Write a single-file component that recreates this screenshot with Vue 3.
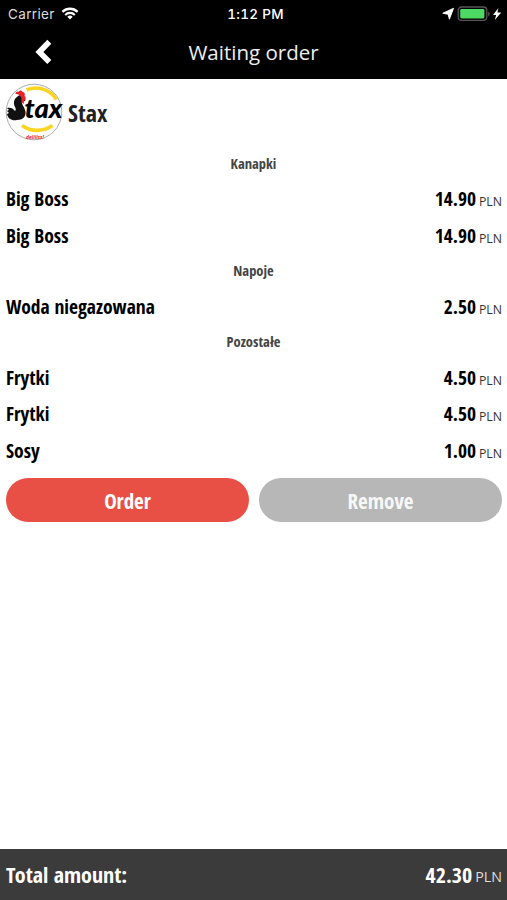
<template>
  <div class="screen">
    <header class="top">
      <div class="status">
        <div class="carrier">
          <span>Carrier</span>
          <svg width="18" height="13" viewBox="0 0 18 13" fill="none" stroke="#fff">
            <path d="M1.4 4.9a10.8 10.8 0 0 1 15.2 0" stroke-width="2.3" />
            <path d="M4.2 7.9a6.8 6.8 0 0 1 9.6 0" stroke-width="2.1" />
            <path d="M9 12.4 6.3 9.8a3.8 3.8 0 0 1 5.4 0z" fill="#fff" stroke="none" />
          </svg>
        </div>
        <div class="time">1:12 PM</div>
        <div class="power">
          <svg width="66" height="16" viewBox="0 0 66 16">
            <path d="M12.4 2.4 8.4 12.8 7.2 8.2 2 7.2z" fill="#fff" stroke="#fff" stroke-width="1.1" stroke-linejoin="round" />
            <rect x="17.2" y="1" width="28.6" height="13.4" rx="3.4" fill="none" stroke="#555" stroke-width="1.3" />
            <rect x="19.2" y="2.9" width="24.2" height="9.6" rx="1.4" fill="#4cd964" />
            <path d="M47.2 5.6c2 .8 2 4 0 4.8z" fill="#555" />
            <path d="M57.4 2 52 9h3.2L53.8 14l6.4-7.4h-3.8z" fill="#fff" />
          </svg>
        </div>
      </div>
      <nav class="bar">
        <button class="back" aria-label="Back">
          <svg width="18" height="26" viewBox="0 0 18 26">
            <path d="M12.3.8 16.3 4.8 8.4 13l7.9 8.1-4 4L.4 13z" fill="#fff" />
          </svg>
        </button>
        <h1>Waiting order</h1>
      </nav>
    </header>

    <main class="content">
      <div class="brand">
        <svg class="logo" width="58" height="58" viewBox="0 0 58 58">
          <circle cx="29" cy="29" r="27.8" fill="#fff" stroke="#aaa" stroke-width="1" />
          <path d="M21.5 6.8C32 2.5 45 6 51.5 16.5" fill="none" stroke="#fbd51f" stroke-width="3.6" />
          <path d="M17 42.5c9 6.5 21 6.5 30.5 0" fill="none" stroke="#fbd51f" stroke-width="3.6" />
          <!-- rooster shaped S -->
          <path
            d="M12 14c-3 2-4 6-2 10 1 2 1 3 0 4-2-3-5-4-8-3l2 2-2 1 2 2-2 1c1 5 5 7 10 6 7 0 10-5 8-10-1-4-4-6-3-9h3c1-2 0-4-2-5-3-1-4-1-6 1z"
            fill="#111"
          />
          <path d="M10.5 11c0-2 2-3 3-2 1-2 3-2 4 0 2 0 3 2 2 4 2 1 1 4 0 4l-1 4c-2-1-2-3-2-5 0-3-3-5-6-5z" fill="#e9222b" />
          <text x="19.5" y="34.5" class="logo-text" textLength="38" lengthAdjust="spacingAndGlyphs">tax</text>
          <text x="21" y="56" class="logo-note">deliliss!</text>
        </svg>
        <h2>Stax</h2>
      </div>

      <section v-for="group in groups" :key="group.name">
        <h3>{{ group.name }}</h3>
        <div v-for="(item, i) in group.items" :key="i" class="item">
          <span class="name">{{ item.name }}</span>
          <span class="price">{{ item.price }} <small>PLN</small></span>
        </div>
      </section>

      <div class="actions">
        <button class="btn order">Order</button>
        <button class="btn remove">Remove</button>
      </div>
    </main>

    <footer class="total">
      <span>Total amount:</span>
      <span class="price">{{ total }} <small>PLN</small></span>
    </footer>
  </div>
</template>

<script setup>
import { computed, ref } from "vue";

const groups = ref([
  {
    name: "Kanapki",
    items: [
      { name: "Big Boss", price: "14.90" },
      { name: "Big Boss", price: "14.90" },
    ],
  },
  {
    name: "Napoje",
    items: [{ name: "Woda niegazowana", price: "2.50" }],
  },
  {
    name: "Pozostałe",
    items: [
      { name: "Frytki", price: "4.50" },
      { name: "Frytki", price: "4.50" },
      { name: "Sosy", price: "1.00" },
    ],
  },
]);

const total = computed(() =>
  groups.value
    .flatMap((group) => group.items)
    .reduce((sum, item) => sum + Number(item.price), 0)
    .toFixed(2)
);
</script>

<style>
body {
  background: #fff;
}
</style>

<style scoped>
* {
  padding: 0;
  margin: 0;
  box-sizing: border-box;
}
.screen {
  height: 900px;
  display: flex;
  flex-direction: column;
  font-family: "Open Sans Condensed", "Open Sans", sans-serif;
  font-stretch: 75%;
  font-weight: bold;
  color: #111;
}
.top {
  height: 79px;
  background: #000;
  color: #fff;
}
.status {
  height: 27px;
  padding: 0 4px 0 8px;
  display: grid;
  grid-template-columns: 1fr auto 1fr;
  align-items: center;
  font: 500 13.5px Inter, sans-serif;
}
.carrier {
  display: flex;
  align-items: center;
  gap: 6px;
  font-weight: 400;
  letter-spacing: 0.35px;
  color: #ddd;
}
.time {
  font-variant-numeric: tabular-nums;
  letter-spacing: 0.3px;
}
.power {
  display: flex;
  justify-content: flex-end;
  margin-right: -4px;
}
.bar {
  height: 50px;
  display: grid;
  grid-template-columns: 88px 1fr 88px;
  align-items: center;
}
.back {
  border: 0;
  background: none;
  height: 26px;
}
.bar h1 {
  font: 400 20.5px/28px "Open Sans", sans-serif;
  text-align: center;
  color: #eee;
}
.content {
  flex: 1;
}
.brand {
  height: 67px;
  padding: 4px 5px 0;
  display: flex;
  align-items: flex-start;
  gap: 5px;
}
.brand h2 {
  font-size: 24px;
  line-height: 60px;
  color: #222;
}
.logo {
  flex: none;
}
.logo-text {
  font: italic 900 26px Lato, sans-serif;
}
.logo-note {
  font: italic 700 5px "Open Sans", sans-serif;
  fill: #e9222b;
}
h3 {
  height: 34.3px;
  line-height: 35.5px;
  font-size: 14.5px;
  text-align: center;
  color: #444;
}
.item {
  height: 36.6px;
  padding: 0 5px 0 6px;
  display: flex;
  justify-content: space-between;
  font-size: 19.5px;
  line-height: 37.4px;
  color: #000;
}
.price small {
  margin-left: -2px;
  font: 400 12.3px "Open Sans", sans-serif;
  color: #333;
}
.actions {
  padding: 9.5px 5px 0 6px;
  display: flex;
  gap: 10px;
}
.btn {
  flex: 1;
  height: 44px;
  padding-top: 2px;
  border: 0;
  border-radius: 22px;
  font: inherit;
  font-size: 21px;
  color: #fff;
}
.order {
  background: #e84f45;
}
.remove {
  background: #b7b7b7;
  color: #f7f7f7;
}
.total {
  height: 51px;
  padding: 0 5px 2px 6px;
  display: flex;
  align-items: center;
  justify-content: space-between;
  background: #3b3b3b;
  font-size: 22px;
  color: #fff;
}
.total small {
  position: relative;
  top: -1px;
  margin-left: -2.5px;
  font-size: 14.3px;
  color: #ddd;
}
</style>
